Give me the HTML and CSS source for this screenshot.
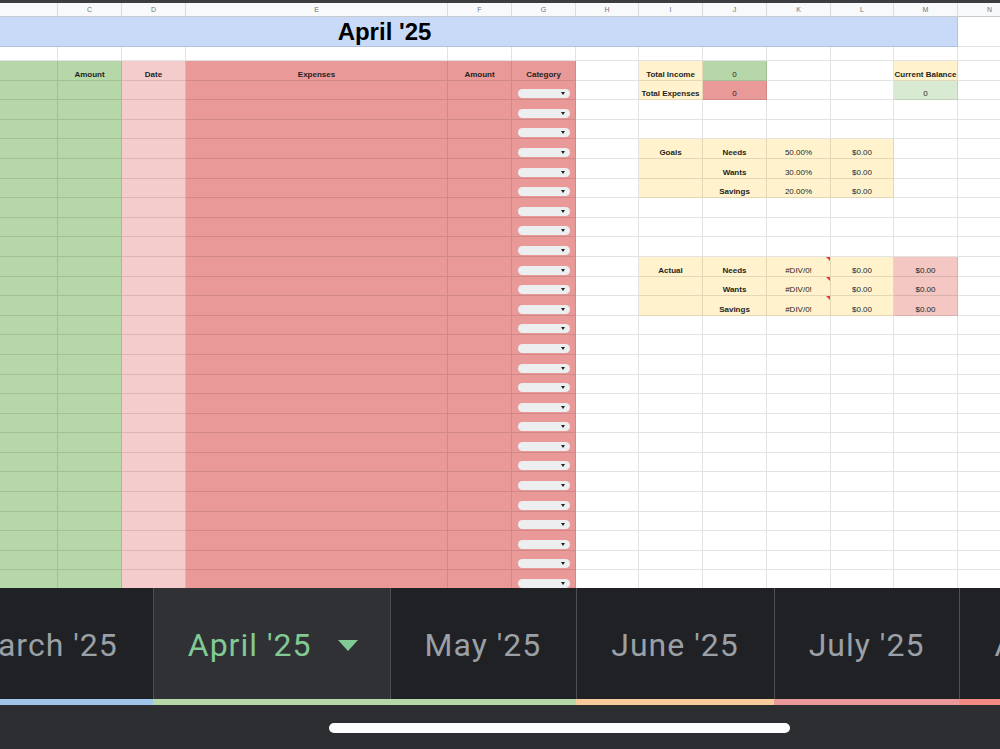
FILE: index.html
```html
<!DOCTYPE html>
<html>
<head>
  <meta charset="utf-8" />
  <meta name="viewport" content="width=device-width, initial-scale=1.0">
  <title>Budget - April '25</title>
  <link rel="stylesheet" href="styles.css">
</head>
<body>

  <div class="top-edge"></div>

  <div class="sheet">
    <div class="grid" id="grid"></div>
  </div>

  <nav class="tabs">
    <div class="tab tab-blue">March '25</div>
    <div class="tab tab-green active">April '25 <span class="caret"></span></div>
    <div class="tab tab-green">May '25</div>
    <div class="tab tab-orange">June '25</div>
    <div class="tab tab-pink">July '25</div>
    <div class="tab tab-red">August '25</div>
  </nav>

  <div class="home-bar">
    <div class="home-pill"></div>
  </div>

<script>
  // --- Sheet layout ---
  // columns A and B are scrolled off to the left, so their labels stay blank
  const letters = 'ABCDEFGHIJKLMN'.split('');
  const hidden = ['A', 'B'];
  const grid = document.getElementById('grid');
  const ROWS = 27;

  // fill colour of the income / expense table, by column
  const fill = { B: 'green', C: 'green', D: 'pink', E: 'red', F: 'red', G: 'red' };
  const headings = { C: 'Amount', D: 'Date', E: 'Expenses', F: 'Amount', G: 'Category' };

  // --- Summary blocks on the right: [row, column, text, classes] ---
  const summary = [
    [0, 'I', 'Total Income', 'yellow bold'],
    [0, 'J', '0', 'green'],
    [0, 'M', 'Current Balance', 'yellow bold'],
    [1, 'I', 'Total Expenses', 'yellow bold'],
    [1, 'J', '0', 'red'],
    [1, 'M', '0', 'mint'],
  ];
  const buckets = ['Needs', 'Wants', 'Savings'];
  const goals = ['50.00%', '30.00%', '20.00%'];
  buckets.forEach((name, i) => {
    summary.push([4 + i, 'I', i === 0 ? 'Goals' : '', 'yellow bold']);
    summary.push([4 + i, 'J', name, 'yellow bold']);
    summary.push([4 + i, 'K', goals[i], 'yellow']);
    summary.push([4 + i, 'L', '$0.00', 'yellow']);
    summary.push([10 + i, 'I', i === 0 ? 'Actual' : '', 'yellow bold']);
    summary.push([10 + i, 'J', name, 'yellow bold']);
    summary.push([10 + i, 'K', '#DIV/0!', 'yellow error']);
    summary.push([10 + i, 'L', '$0.00', 'yellow']);
    summary.push([10 + i, 'M', '$0.00', 'over']);
  });
  const lookup = {};
  summary.forEach(([r, c, text, cls]) => { lookup[r + c] = { text, cls }; });

  function addCell(cls, text) {
    const el = document.createElement('div');
    el.className = 'cell ' + cls;
    if (text) el.textContent = text;
    grid.appendChild(el);
    return el;
  }

  // column letters
  letters.forEach(l => addCell('colhead', hidden.includes(l) ? '' : l));

  // merged title row (A:M) + N
  addCell('title', "April '25");
  addCell('', '');

  // spacer row
  letters.forEach(() => addCell('', ''));

  // data rows
  for (let r = 0; r < ROWS; r++) {
    letters.forEach(c => {
      const hit = lookup[r + c];
      if (hit) {
        addCell(hit.cls, hit.text);
      } else if (fill[c]) {
        if (r === 0) {
          addCell(fill[c] + ' bold', headings[c] || '');
        } else if (c === 'G') {
          const el = addCell(fill[c] + ' dd', '');
          const chip = document.createElement('span');
          chip.className = 'chip';
          el.appendChild(chip);
        } else {
          addCell(fill[c], '');
        }
      } else {
        addCell('', '');
      }
    });
  }
</script>

</body>
</html>
```

FILE: styles.css
```css
/* --- General Setup --- */
:root {
  --green: #b6d7a8;
  --mint: #d9ead3;
  --pink: #f4cccc;
  --red: #ea9999;
  --over: #f4c7c3;
  --yellow: #fff2cc;
  --blue: #c9daf8;
  --grid-line: rgba(0, 0, 0, 0.11);
  --tab-bg: #202124;
  --tab-active: #303134;
  --tab-text: #9aa0a6;
  --tab-text-active: #81c995;
}
*, *::before, *::after {
  box-sizing: border-box;
}
html, body {
  margin: 0;
}
body {
  width: 1000px;
  height: 749px;
  overflow: hidden;
  display: flex;
  flex-direction: column;
  background: var(--tab-bg);
  font-family: "Liberation Sans", Arial, sans-serif;
}
.top-edge {
  flex: none;
  height: 3px;
  background: #3c3d40;
}

/* --- Spreadsheet --- */
.sheet {
  flex: none;
  height: 585px;
  overflow: hidden;
  background: #fff;
}
.grid {
  display: grid;
  margin-left: -188px; /* columns A and most of B are scrolled off */
  grid-template-columns: 46px 200px 64px 64px 262px 64px 64px 63px 64px 64px 64px 63px 64px 64px;
  grid-template-rows: 14px 30px 14px;
  grid-auto-rows: 19.6px;
}
.cell {
  position: relative;
  display: flex;
  align-items: flex-end;
  justify-content: center;
  padding-bottom: 1px;
  border-right: 1px solid var(--grid-line);
  border-bottom: 1px solid var(--grid-line);
  font-size: 8px;
  line-height: 9px;
  color: #1f1f1f;
  white-space: nowrap;
}
.colhead {
  align-items: center;
  padding: 0;
  background: #f8f9fa;
  border-right: 1px solid #dadcdf;
  border-bottom: 1px solid #c8cacd;
  font-size: 7px;
  color: #70757a;
}
.title {
  grid-column: 1 / 14;
  align-items: center;
  padding: 0;
  background: var(--blue);
  font-size: 24px;
  line-height: 28px;
  font-weight: bold;
  color: #000;
}
.bold { font-weight: bold; }
.green { background: var(--green); }
.mint { background: var(--mint); }
.pink { background: var(--pink); }
.red { background: var(--red); }
.over { background: var(--over); }
.yellow { background: var(--yellow); }

/* little red corner on formula errors */
.error::after {
  content: "";
  position: absolute;
  top: 0;
  right: 0;
  border-top: 4px solid #e53935;
  border-left: 4px solid transparent;
}

/* category dropdown chip */
.dd {
  padding-bottom: 1px;
}
.chip {
  position: relative;
  width: 52px;
  height: 9px;
  border-radius: 5px;
  background: #eceef0;
}
.chip::after {
  content: "";
  position: absolute;
  right: 5px;
  top: 3px;
  border-left: 2px solid transparent;
  border-right: 2px solid transparent;
  border-top: 3px solid #202124;
}

/* --- Sheet tabs --- */
.tabs {
  flex: none;
  display: flex;
  height: 117px;
  margin-left: -66px;
  background: var(--tab-bg);
}
.tab {
  flex: none;
  display: flex;
  align-items: center;
  gap: 26px;
  height: 117px;
  padding: 3px 35px 0;
  border-bottom: 6px solid;
  box-shadow: inset 1px 0 0 #4d4f53;
  font-family: Roboto, "Noto Sans", sans-serif;
  font-size: 32px;
  letter-spacing: 1px;
  color: var(--tab-text);
}
.tab.active {
  padding-right: 32px;
  background: var(--tab-active);
  color: var(--tab-text-active);
}
.caret {
  width: 0;
  height: 0;
  border-left: 10px solid transparent;
  border-right: 10px solid transparent;
  border-top: 11px solid var(--tab-text-active);
}
.tab-blue { border-bottom-color: #9fc5e8; }
.tab-green { border-bottom-color: #b6d7a8; }
.tab-orange { border-bottom-color: #f9cb9c; }
.tab-pink { border-bottom-color: #ea9999; }
.tab-red { border-bottom-color: #f28b82; }

/* --- Home indicator --- */
.home-bar {
  flex: 1;
  padding-top: 18px;
  background: #2d2e31;
}
.home-pill {
  width: 461px;
  height: 10px;
  margin-left: 329px;
  border-radius: 5px;
  background: #fff;
}
```
